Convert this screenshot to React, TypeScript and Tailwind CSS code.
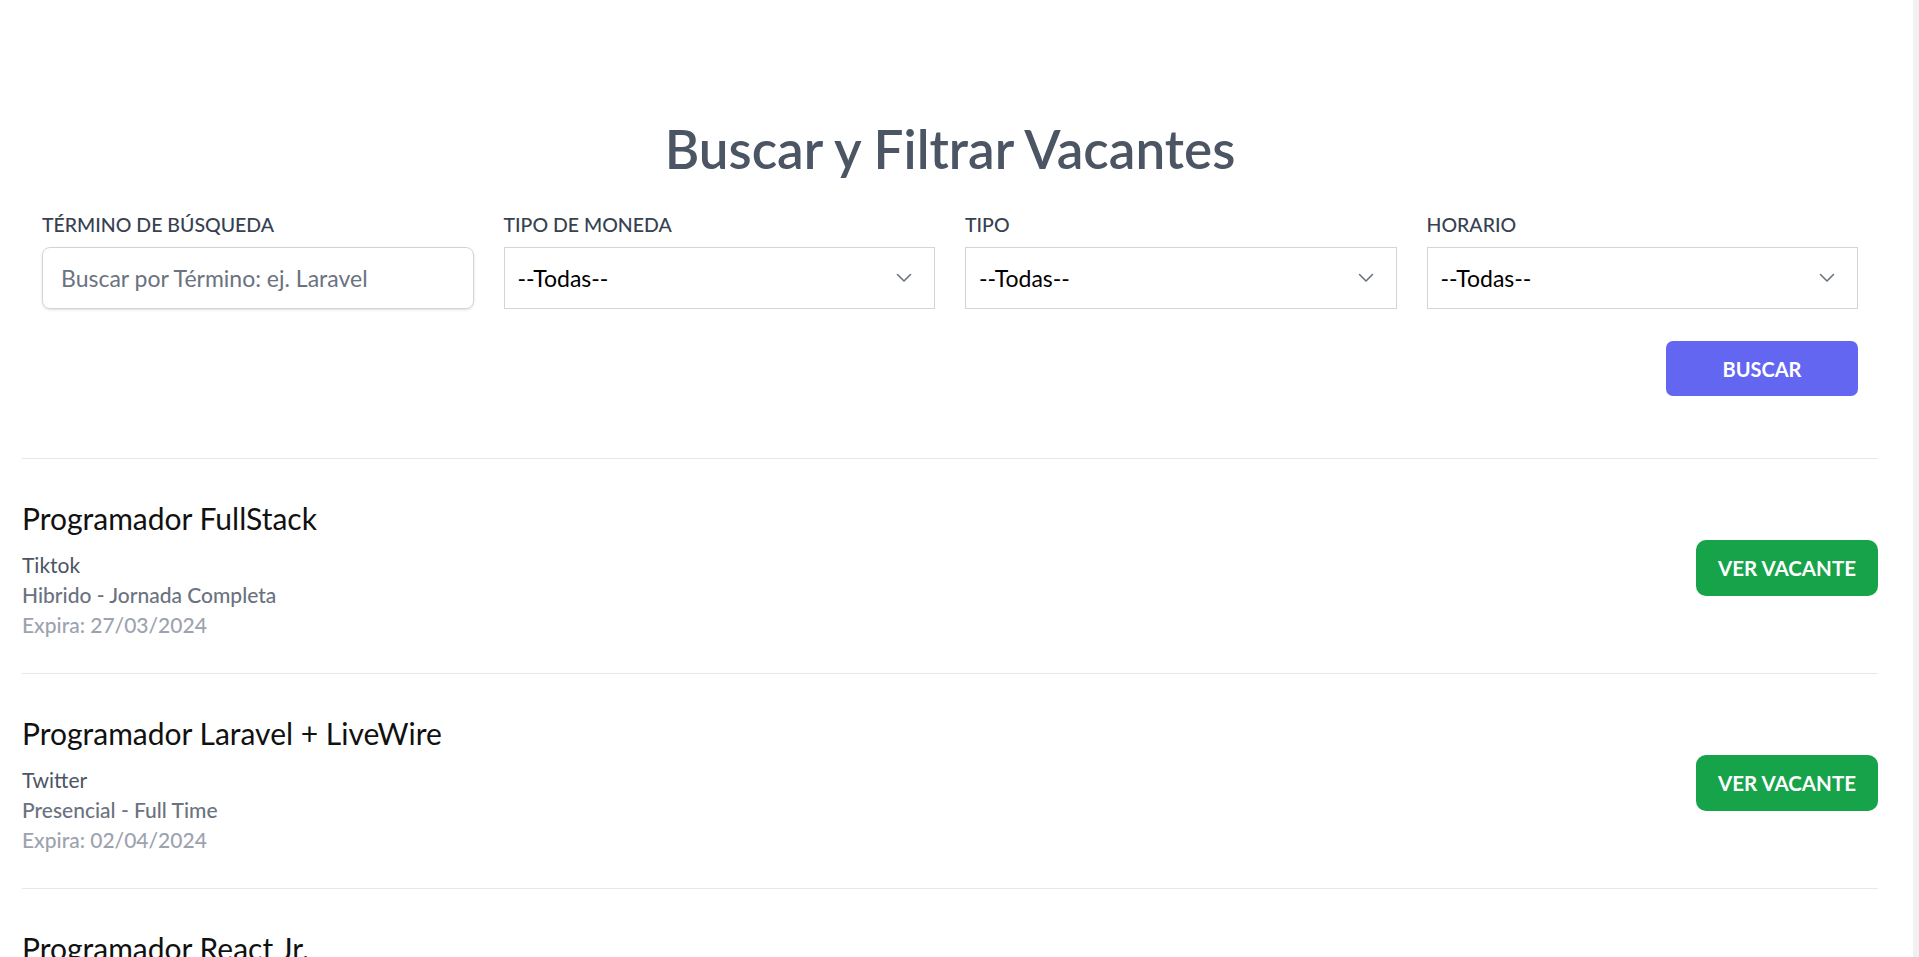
import { ChangeEvent, useState } from "react";

type Vacante = {
  titulo: string;
  empresa: string;
  modalidad: string;
  expira: string;
};

const vacantes: Vacante[] = [
  {
    titulo: "Programador FullStack",
    empresa: "Tiktok",
    modalidad: "Hibrido - Jornada Completa",
    expira: "27/03/2024",
  },
  {
    titulo: "Programador Laravel + LiveWire",
    empresa: "Twitter",
    modalidad: "Presencial - Full Time",
    expira: "02/04/2024",
  },
  {
    titulo: "Programador React Jr.",
    empresa: "Meta",
    modalidad: "Remoto - Medio Tiempo",
    expira: "15/04/2024",
  },
];

const Chevron = () => (
  <svg
    className="pointer-events-none absolute right-[23px] top-1/2 -translate-y-1/2"
    width="16"
    height="10"
    viewBox="0 0 16 10"
    fill="none"
  >
    <path
      d="M1.5 1.5l6.5 6.5 6.5-6.5"
      stroke="#6b7280"
      strokeWidth="1.6"
      strokeLinecap="round"
      strokeLinejoin="round"
    />
  </svg>
);

const FiltroSelect = ({ label, id }: { label: string; id: string }) => {
  return (
    <div className="flex flex-col">
      <label
        htmlFor={id}
        className="mb-[8px] text-[19.5px] leading-[28px] font-medium uppercase text-[#374151]"
      >
        {label}
      </label>
      <div className="relative">
        <select
          id={id}
          className="h-[62px] w-full appearance-none border border-[#d1d5db] bg-white pl-[13px] text-[23px] text-black outline-none"
        >
          <option value="">--Todas--</option>
        </select>
        <Chevron />
      </div>
    </div>
  );
};

const VacanteItem = ({ vacante }: { vacante: Vacante }) => {
  return (
    <div className="flex items-center justify-between border-t border-[#e5e7eb] pt-[37px] pb-[33px]">
      <div className="flex flex-col">
        <a href="#" className="text-[30px] leading-[44px] text-[#111111]">
          {vacante.titulo}
        </a>
        <p className="mt-[10px] text-[21px] leading-[30px] text-[#4b5563]">
          {vacante.empresa}
        </p>
        <p className="text-[21px] leading-[30px] font-medium text-[#6b7280]">
          {vacante.modalidad}
        </p>
        <p className="text-[21px] leading-[30px] font-medium text-[#9ca3af]">
          Expira: {vacante.expira}
        </p>
      </div>
      <a
        href="#"
        className="flex h-[56px] w-[182px] items-center justify-center rounded-[10px] bg-[#16a34a] text-[20.5px] font-bold uppercase text-white"
      >
        Ver Vacante
      </a>
    </div>
  );
};

export default function App() {
  const [termino, setTermino] = useState("");

  return (
    <div className="flex h-screen overflow-hidden bg-white font-['Lato',sans-serif]">
      <main className="flex-1 overflow-hidden">
        <div className="ml-[22px] w-[1856px]">
          <h2 className="pt-[119px] text-center text-[53px] leading-[60px] font-semibold text-[#4b5563]">
            Buscar y Filtrar Vacantes
          </h2>

          <form className="mt-[32px] px-[20px]" onSubmit={(e) => e.preventDefault()}>
            <div className="grid grid-cols-4 gap-x-[30px]">
              <div className="flex flex-col">
                <label
                  htmlFor="termino"
                  className="mb-[8px] text-[19.5px] leading-[28px] font-medium uppercase text-[#374151]"
                >
                  Término de Búsqueda
                </label>
                <input
                  id="termino"
                  type="text"
                  value={termino}
                  onChange={(e: ChangeEvent<HTMLInputElement>) => setTermino(e.target.value)}
                  placeholder="Buscar por Término: ej. Laravel"
                  className="h-[62px] rounded-[8px] border border-[#d1d5db] px-[18px] text-[23px] text-black shadow-sm outline-none placeholder:text-[#6b7280]"
                />
              </div>
              <FiltroSelect label="Tipo de Moneda" id="moneda" />
              <FiltroSelect label="Tipo" id="tipo" />
              <FiltroSelect label="Horario" id="horario" />
            </div>

            <div className="mt-[32px] flex justify-end">
              <button
                type="submit"
                className="h-[55px] w-[192px] rounded-[7px] bg-[#6366f1] text-[20px] font-bold uppercase text-white"
              >
                Buscar
              </button>
            </div>
          </form>

          <div className="mt-[62px]">
            {vacantes.map((vacante) => (
              <VacanteItem key={vacante.titulo} vacante={vacante} />
            ))}
          </div>
        </div>
      </main>
      <div className="w-[6px] bg-[#f1f1f1]" />
    </div>
  );
}
